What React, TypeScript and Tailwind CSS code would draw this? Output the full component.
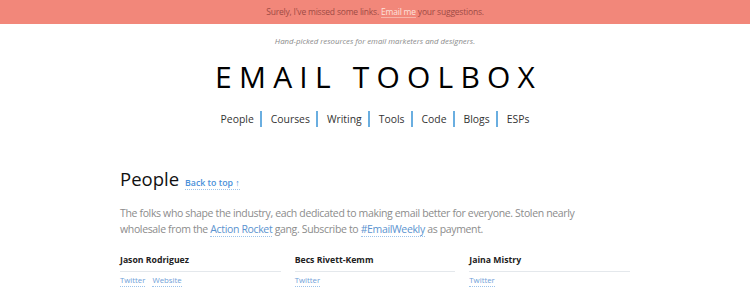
export default function App() {
  const font = { fontFamily: '"Open Sans", sans-serif' };
  const nav = ["People", "Courses", "Writing", "Tools", "Code", "Blogs", "ESPs"];
  const people = [
    { name: "Jason Rodriguez", links: ["Twitter", "Website"] },
    { name: "Becs Rivett-Kemm", links: ["Twitter"] },
    { name: "Jaina Mistry", links: ["Twitter"] },
  ];
  return (
    <div className="w-[750px] h-[300px] overflow-hidden bg-white" style={font}>
      <div className="h-[24px] bg-[#f2877a] flex items-center justify-center text-[8.5px] tracking-[-0.2px] text-[#9e4b45]">
        <span>
          Surely, I've missed some links.{" "}
          <span className="text-[#fde2dc] border-b border-[#f8b5aa]">Email me</span> your suggestions.
        </span>
      </div>
      <p className="mt-[11px] text-center italic text-[7.8px] text-[#8a8a8a] leading-[12px]">
        Hand-picked resources for email marketers and designers.
      </p>
      <h1 className="mt-[10px] text-center text-[30px] leading-[40px] tracking-[0.24em] pl-[0.24em] text-black font-normal">
        EMAIL TOOLBOX
      </h1>
      <nav className="mt-[14px] flex justify-center items-center text-[10.4px] text-[#333] leading-[16px]">
        {nav.map((n, i) => (
          <div key={n} className="flex items-center">
            {i > 0 && <span className="w-[2px] h-[16px] bg-[#6aaee0] ml-[6px] mr-[9px]"></span>}
            <span>{n}</span>
          </div>
        ))}
      </nav>
      <div className="ml-[120px] w-[510px] mt-[38px]">
        <div className="flex items-baseline">
          <h2 className="text-[18.5px] leading-[28px] text-[#111] font-normal">People</h2>
          <span className="ml-[6px] text-[8.8px] font-semibold text-[#4a90d9] border-b border-dotted border-[#9cc3ea] leading-[12px]">
            Back to top ↑
          </span>
        </div>
        <p className="mt-[12px] text-[10.5px] tracking-[-0.35px] leading-[16px] text-[#8c8c8c] pr-[20px]">
          The folks who shape the industry, each dedicated to making email better for everyone. Stolen nearly wholesale from the{" "}
          <span className="text-[#5b93cf] border-b border-dotted border-[#9cc3ea]">Action Rocket</span> gang. Subscribe to{" "}
          <span className="text-[#5b93cf] border-b border-dotted border-[#9cc3ea]">#EmailWeekly</span> as payment.
        </p>
        <div className="mt-[16px] grid grid-cols-3 gap-x-[14px]">
          {people.map((p) => (
            <div key={p.name}>
              <div className="text-[8.7px] font-bold text-[#222] leading-[14px] pb-[4px] border-b border-[#e4e8ec]">
                {p.name}
              </div>
              <div className="mt-[2px] flex gap-[7px] text-[7.8px] text-[#6fa0d8] leading-[12px]">
                {p.links.map((l) => (
                  <span key={l} className="border-b border-dotted border-[#9cc3ea]">{l}</span>
                ))}
              </div>
            </div>
          ))}
        </div>
      </div>
    </div>
  );
}
